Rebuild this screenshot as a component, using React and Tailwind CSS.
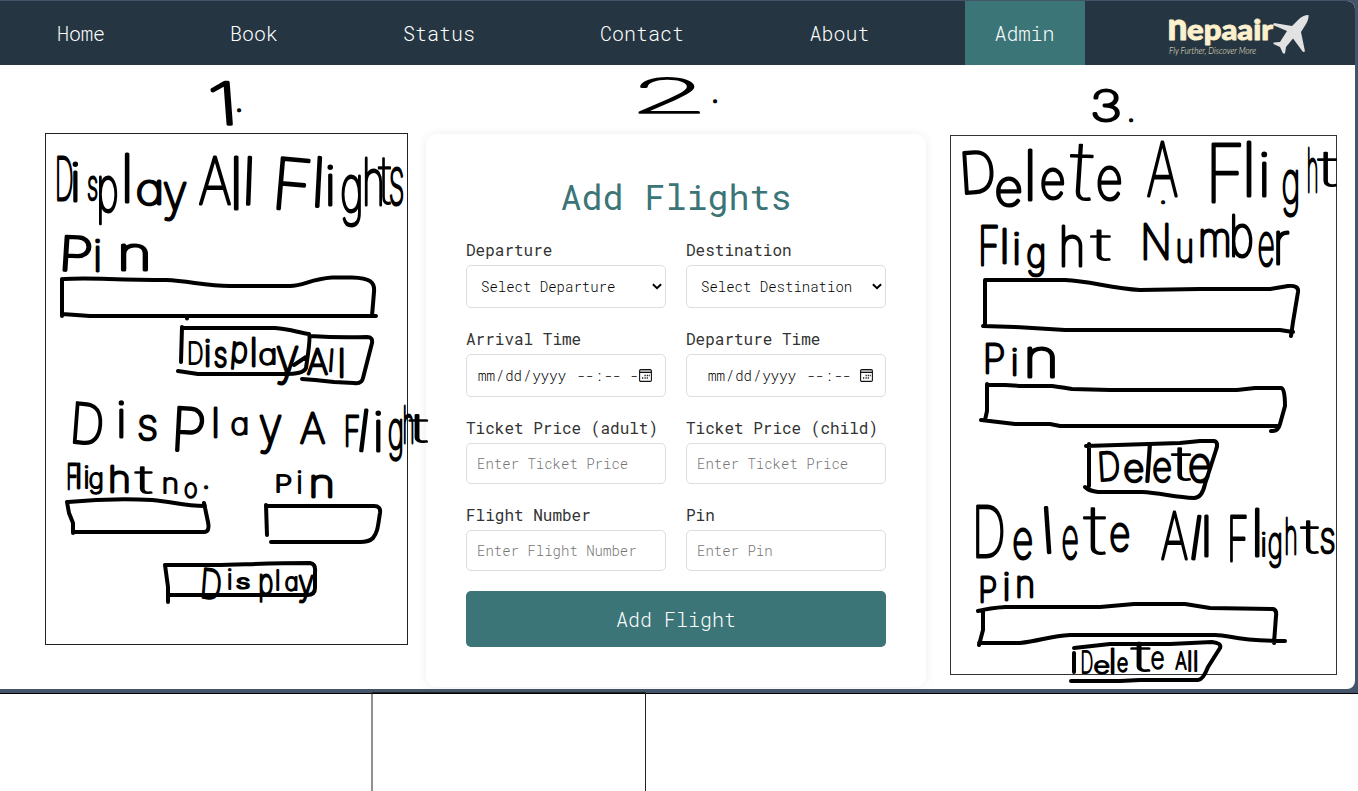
import React from "react";

/* Proportions of each letter: [advance, left bearing, ink width, ink top, ink bottom] in em. */
const M = {
  D: [0.72, 0.09, 0.57, 0.727, 0], A: [0.68, 0.03, 0.62, 0.727, 0], F: [0.6, 0.09, 0.46, 0.727, 0],
  P: [0.63, 0.09, 0.5, 0.727, 0], N: [0.75, 0.09, 0.57, 0.727, 0],
  a: [0.61, 0.05, 0.485, 0.55, 0], e: [0.59, 0.05, 0.48, 0.55, 0], o: [0.6, 0.05, 0.49, 0.55, 0],
  n: [0.59, 0.08, 0.445, 0.55, 0], u: [0.59, 0.08, 0.445, 0.55, 0], m: [0.88, 0.08, 0.73, 0.55, 0],
  s: [0.53, 0.05, 0.43, 0.55, 0], r: [0.38, 0.08, 0.29, 0.55, 0],
  h: [0.6, 0.08, 0.445, 0.727, 0], b: [0.61, 0.075, 0.49, 0.727, 0], t: [0.36, 0.02, 0.3, 0.69, 0],
  p: [0.61, 0.075, 0.49, 0.55, 0.2], g: [0.61, 0.05, 0.485, 0.55, 0.2], y: [0.56, 0.03, 0.5, 0.55, 0.2],
  i: [0.24, 0.09, 0, 0.727, 0], l: [0.24, 0.1, 0, 0.727, 0],
  1: [0.45, 0.05, 0.25, 0.727, 0], 2: [0.62, 0.06, 0.5, 0.727, 0], 3: [0.64, 0.06, 0.52, 0.727, 0],
};

/* Handwritten words; every letter is [char, left, right, top, bottom, tilt in degrees]. */
const WORDS = [
  [["1", 213, 230, 83, 125, -3], [".", 239, 110]],
  [["2", 635, 703, 78, 113], [".", 715, 101]],
  [["3", 1093, 1119, 90, 121], [".", 1131, 120]],
  [["D", 57, 72, 157, 200], ["i", 76, 76, 163, 201], ["s", 88, 97, 177, 199], ["p", 99, 117, 177, 223], ["l", 128, 128, 154, 202], ["a", 138, 161, 181, 204], ["y", 164, 186, 184, 220]],
  [["A", 200, 230, 157, 204], ["l", 237, 237, 157, 209], ["l", 249, 249, 157, 204, 2]],
  [["F", 276, 307, 157, 208, 5], ["l", 318, 318, 157, 206, 3], ["i", 331, 331, 166, 205], ["g", 342, 361, 176, 225], ["h", 365, 382, 158, 205], ["t", 379, 390, 157, 204], ["s", 390, 403, 168, 204]],
  [["P", 63, 90, 236, 270, 3], ["i", 98, 98, 240, 271], ["n", 122, 148, 245, 270]],
  [["D", 189, 202, 342, 364], ["i", 208, 208, 340, 366], ["s", 215, 226, 348, 366], ["p", 232, 246, 342, 368, 5], ["l", 254, 254, 338, 366], ["a", 260, 275, 349, 364], ["y", 277, 298, 348, 384]],
  [["A", 308, 327, 349, 374], ["l", 331, 331, 349, 371, 4], ["l", 342, 342, 349, 377]],
  [["D", 73, 100, 402, 442, 5], ["i", 122, 122, 401, 437], ["s", 139, 156, 416, 439], ["P", 175, 203, 407, 450, 3], ["l", 216, 216, 408, 437], ["a", 232, 247, 418, 434], ["y", 260, 281, 417, 453]],
  [["A", 301, 324, 413, 443]],
  [["F", 346, 359, 416, 446], ["l", 362, 362, 409, 450, 7], ["i", 379, 379, 412, 451], ["g", 389, 402, 420, 459], ["h", 404, 413, 406, 443], ["t", 410, 427, 414, 442]],
  [["F", 68, 77, 464, 489], ["l", 79, 79, 464, 488], ["i", 87, 87, 466, 488], ["g", 90, 102, 473, 493], ["h", 111, 128, 466, 492], ["t", 135, 152, 467, 493]],
  [["n", 164, 177, 478, 493], ["o", 185, 196, 483, 497], [".", 206, 487]],
  [["P", 277, 291, 475, 492], ["i", 300, 300, 471, 493], ["n", 312, 332, 476, 497]],
  [["D", 202, 219, 568, 597, 6], ["i", 230, 230, 569, 589], ["s", 236, 250, 578, 588], ["p", 260, 272, 575, 601], ["l", 278, 278, 570, 590], ["a", 286, 297, 577, 590], ["y", 299, 313, 576, 602]],
  [["D", 965, 994, 153, 194, -4], ["e", 997, 1020, 178, 205], ["l", 1031, 1031, 150, 200], ["e", 1042, 1063, 169, 198], ["t", 1069, 1089, 143, 199, 3], ["e", 1098, 1120, 167, 199]],
  [["A", 1148, 1177, 142, 196], [".", 1163, 202]],
  [["F", 1211, 1242, 144, 202], ["l", 1250, 1250, 142, 196], ["i", 1265, 1265, 152, 196], ["g", 1283, 1298, 171, 215], ["h", 1308, 1317, 148, 192], ["t", 1319, 1335, 152, 186]],
  [["F", 981, 998, 226, 265], ["l", 1005, 1005, 229, 263], ["i", 1017, 1017, 233, 264], ["g", 1028, 1044, 245, 275], ["h", 1062, 1082, 226, 266], ["t", 1086, 1115, 230, 260]],
  [["N", 1144, 1168, 224, 259], ["u", 1178, 1192, 240, 262], ["m", 1201, 1229, 230, 256], ["b", 1232, 1252, 215, 256], ["e", 1259, 1273, 233, 265], ["r", 1276, 1289, 232, 264]],
  [["P", 986, 1004, 344, 373], ["i", 1015, 1015, 349, 375], ["n", 1028, 1055, 348, 377]],
  [["D", 1101, 1119, 453, 481, -4], ["e", 1125, 1142, 461, 481], ["l", 1148, 1148, 445, 481, 4], ["e", 1154, 1170, 459, 481], ["t", 1173, 1189, 448, 480], ["e", 1190, 1209, 455, 481]],
  [["D", 976, 1003, 506, 557], ["e", 1014, 1031, 529, 558], ["l", 1050, 1050, 508, 553, -4], ["e", 1063, 1077, 527, 558], ["t", 1085, 1104, 507, 554], ["e", 1111, 1128, 524, 550]],
  [["A", 1162, 1187, 512, 559], ["l", 1194, 1194, 515, 558, 8], ["l", 1207, 1207, 516, 556]],
  [["F", 1230, 1247, 516, 561], ["l", 1258, 1258, 509, 556], ["i", 1264, 1264, 533, 556], ["g", 1269, 1281, 535, 567], ["h", 1286, 1296, 518, 554], ["t", 1302, 1317, 521, 553], ["s", 1321, 1334, 529, 552]],
  [["P", 981, 996, 577, 602], ["i", 1007, 1007, 573, 600], ["n", 1018, 1033, 577, 597]],
  [["D", 1082, 1092, 651, 673], ["e", 1095, 1108, 661, 673], ["l", 1113, 1113, 649, 673], ["e", 1118, 1127, 658, 671], ["t", 1131, 1150, 642, 671], ["e", 1152, 1163, 652, 668]],
  [["A", 1176, 1186, 652, 669], ["l", 1190, 1190, 651, 671], ["l", 1196, 1196, 651, 671]],
];

function glyph([ch, x0, x1, top, bottom]) {
  if (ch === ".") return { x: x0 - 4, y: x1 + 1.2, size: 30, pen: 2.6 };
  const [adv, lsb, ink, up, down] = M[ch];
  const size = (bottom - top) / (up + down);
  const y = bottom - down * size;
  const pen = size > 45 ? 3.1 : size > 32 ? 2.8 : 2.2;
  if (!ink) return { x: x0 - 0.12 * size, y, size, pen };
  /* Wide strokes thicken when a letter is stretched, so the stretch is limited. */
  const full = (x1 - x0) / (ink * size);
  const k = Math.min(full, ch === "t" ? 1.25 : ch === "2" ? 2.7 : 1.45);
  const mid = (x0 + x1) / 2;
  return {
    x: mid - (lsb + ink / 2) * size * k,
    y,
    size,
    length: adv * size * k,
    pen: ch === "t" || ch === "2" ? 1.7 : pen,
  };
}

function Word({ letters }) {
  return (
    <text>
      {letters.map((l, i) => {
        const g = glyph(l);
        return (
          <tspan key={i} x={g.x} y={g.y} fontSize={g.size} strokeWidth={g.pen} rotate={l[5]} textLength={g.length} lengthAdjust={g.length ? "spacingAndGlyphs" : undefined}>
            {l[0]}
          </tspan>
        );
      })}
    </text>
  );
}

/* Hand-drawn boxes. */
const BOXES = [
  "M62 279 V316 M64 279 C90 277 110 280 166 280 C190 281 205 286 230 286 H290 C304 286 310 279 332 277.500 H352 C370 278 375 282 374 292 L372 316 M62 314 L90 316 H376",
  "M182 327 L181 362 M182 328 H275 C290 329 300 333 309 334 C311 338 307 360 306 368 C304 373 296 374 285 374 H198 L178 371 M310 336 C325 337 340 338 367 337 Q373 337 372 343 L363 378 Q362 384 354 383 L334 382 L315 380 L302 379 M294 365 L306 357",
  "M67 502 L69 513 L73 523 V533 M68 502 C100 499 130 499 152 500 C175 502 182 506 205 506 M204 503 L208 522 Q210 532 204 532 H74",
  "M266 505 L267 535 M267 506 H374 Q381 506 380 513 C378 525 378 532 373 538 Q369 542 360 542 H271",
  "M165 565 L168 587 V602 M165 565 H215 C240 565 260 563 310 563 Q316 564 315 572 V588 Q315 595 307 595 H168",
  "M985 280 L985 326 M985 280 H1065 C1090 281 1110 288 1140 290 L1200 289 H1270 L1288 286 Q1299 285 1298 292 L1293 322 L1291 336 M983 326 L1015 327 L1065 330 H1280 L1293 332",
  "M987 384 V411 L985 420 M988 385 H1005 L1020 386 H1052 Q1067 388 1072 389 L1110 390 H1237 L1255 388 H1281 Q1285 388 1285 406 L1280 424 Q1278 432 1271 431 M981 420 L1015 424 H1050 L1060 426 H1279",
  "M1089 444 V486 M1086 446 L1180 443 L1200 441 H1214 Q1219 442 1216 450 L1205 484 Q1202 498 1194 498 C1175 497 1160 493 1142 492 H1098 Q1089 491 1085 487",
  "M978 611 Q990 608 1005 607 H1100 L1134 604 H1185 L1210 608 L1273 609 Q1277 610 1276 616 L1274 643 M983 611 V630 L979 645 M979 643 H1020 C1040 641 1050 636 1070 635 H1215 C1232 635 1232 641 1285 641",
  "M1074 653 V672 M1074 648 L1110 644 H1170 L1212 642 Q1222 643 1220 648 L1208 667 Q1203 680 1198 680 H1140 L1120 681 H1071",
];

const NAV = [
  ["Home", "w-[162px]"], ["Book", "w-[184px]"], ["Status", "w-[186px]"], ["Contact", "w-[220px]"],
  ["About", "w-[175px]"],
];

function Logo() {
  return (
    <svg width="148" height="64" viewBox="1165 1 148 64" className="ml-[80px]" role="img">
      <g fill="#fdf0cd" stroke="#fdf0cd" strokeWidth="0.900" strokeLinejoin="round" fontFamily="Lato, sans-serif" fontWeight="900">
        <text y="40" fontSize="28">
          <tspan x="1167.500" fontSize="38" textLength="20" lengthAdjust="spacingAndGlyphs">n</tspan>
          <tspan x="1187" textLength="86" lengthAdjust="spacingAndGlyphs">epaair</tspan>
        </text>
      </g>
      <text x="1169" y="53.500" fill="#fdf0cd" fontFamily="Lato, sans-serif" fontStyle="italic" fontSize="9.500" textLength="87" lengthAdjust="spacingAndGlyphs">
        Fly Further, Discover More
      </text>
      <path fill="#e2e2e2" d="M1308.5 15 Q1303 15 1298 20 L1292 26 L1274 23 L1273 25 L1287 31 L1280 42 L1273.500 42.500 L1273.500 44 L1280 47 L1283 53.500 L1285 53.500 L1286 47 L1293 38.500 L1303 52 L1305 51.500 L1301 32 L1306 24 Q1309 19 1308.500 15Z" />
    </svg>
  );
}

function CalendarIcon() {
  return (
    <svg width="13" height="13" viewBox="0 0 13 13" fill="none" stroke="#111" className="-mt-px shrink-0">
      <path d="M1 2.200H12" stroke="#aaa" strokeWidth="1.500" />
      <rect x="0.600" y="0.600" width="11.800" height="11.800" rx="1.200" strokeWidth="1.100" />
      <path d="M0.700 3.500H12.300" strokeWidth="1" />
      <path d="M5.500 6.500h1.200M7.700 6.500h1.200M9.700 6.500h1M3 9h1.200M5.500 9h1.200M7.700 9h1.200" strokeWidth="1.300" />
    </svg>
  );
}

const FIELD = "flex items-center rounded-[5px] border border-[#ddd] bg-white text-[14px] font-light overflow-hidden";

function Field({ label, children }) {
  return (
    <div className="flex flex-col">
      <div className="h-[24px] mb-[3px] text-[16px] leading-[24px] text-[#333] whitespace-nowrap">{label}</div>
      {children}
    </div>
  );
}

function Select({ text }) {
  return (
    <div className={FIELD + " h-[43px] pl-[14px] pr-[3px] justify-between text-black"}>
      <span>{text}</span>
      <svg width="10" height="7" viewBox="0 0 10 7" fill="none" stroke="#000" strokeWidth="2">
        <path d="M0.900 1.200 5 5.200 9.100 1.200" />
      </svg>
    </div>
  );
}

function DateField({ shifted }) {
  return (
    <div className={FIELD + " h-[43px] text-black whitespace-nowrap " + (shifted ? "pl-[21px]" : "pl-[11px]")}>
      <span className="w-[99px]"><span>mm</span><span className="px-[1px]">/</span><span>dd</span><span className="px-[1px]">/</span><span>yyyy</span></span>
      <span className="flex w-[53px]"><span>--</span><span className="px-[1px]">:</span><span>--</span></span>
      {!shifted && <span className="w-[9px] overflow-hidden">-</span>}
      <CalendarIcon />
    </div>
  );
}

function Input({ text }) {
  return <div className={FIELD + " h-[41px] pl-[10px] text-[#757575]"}>{text}</div>;
}

export default function App() {
  return (
    <div className="relative h-[791px] w-[1358px] overflow-hidden bg-white font-['Roboto_Mono','Liberation_Mono',monospace]">
      <div className="h-[694px] border-b border-black bg-[#445469] pr-[3px] pt-px">
        <div className="flex h-[688px] flex-col overflow-hidden rounded-r-[8px] bg-white">
          <nav className="flex h-[64px] shrink-0 items-stretch bg-[#253642] text-[20px] font-light text-white">
            <div className="flex w-[965px]">
              {NAV.map(([n, w]) => (
                <div key={n} className={"flex shrink-0 items-center justify-center " + w}>{n}</div>
              ))}
            </div>
            <div className="flex w-[120px] items-center justify-center bg-[#3b7577] pr-px">Admin</div>
            <div className="flex items-center"><Logo /></div>
          </nav>
          <main className="flex justify-center pr-[3px] pt-[69px]">
            <section className="flex h-[553px] w-[500px] flex-col rounded-[10px] bg-white px-[40px] pt-[38px] shadow-[0_0_10px_rgba(0,0,0,0.08)]">
              <h1 className="h-[48px] text-center text-[35px] leading-[48px] text-[#3b7577]">Add Flights</h1>
              <div className="mt-[18px] grid grid-cols-[200px_200px] gap-x-[20px]">
                <div className="h-[89px]"><Field label="Departure"><Select text="Select Departure" /></Field></div>
                <div className="h-[89px]"><Field label="Destination"><Select text="Select Destination" /></Field></div>
                <div className="h-[89px]"><Field label="Arrival Time"><DateField /></Field></div>
                <div className="h-[89px]"><Field label="Departure Time"><DateField shifted /></Field></div>
                <div className="h-[87px]"><Field label="Ticket Price (adult)"><Input text="Enter Ticket Price" /></Field></div>
                <div className="h-[87px]"><Field label="Ticket Price (child)"><Input text="Enter Ticket Price" /></Field></div>
                <div className="h-[88px]"><Field label="Flight Number"><Input text="Enter Flight Number" /></Field></div>
                <div className="h-[88px]"><Field label="Pin"><Input text="Enter Pin" /></Field></div>
              </div>
              <button className="h-[56px] shrink-0 rounded-[5px] bg-[#3b7577] text-[20px] font-light text-white">Add Flight</button>
            </section>
          </main>
        </div>
      </div>
      <svg width="1358" height="791" viewBox="0 0 1358 791" className="pointer-events-none absolute left-0 top-0 font-['Inter',sans-serif] [font-feature-settings:'cv11']">
        <g fill="none" stroke="#222" strokeWidth="1">
          <rect x="45.500" y="133.500" width="362" height="511" />
          <rect x="950.500" y="135.500" width="386" height="539" stroke="#333" />
          <path d="M372 800V692.500H645.500V800" stroke="#222" />
        </g>
        <g fill="none" stroke="#000" strokeWidth="4" strokeLinecap="round" strokeLinejoin="round">
          {BOXES.map((d) => <path key={d} d={d} />)}
          <circle cx="187" cy="318.500" r="2" fill="#000" stroke="none" />
        </g>
        <g fill="#000" stroke="#000" strokeLinejoin="round" fontWeight="100">
          {WORDS.map((w, i) => <Word key={i} letters={w} />)}
        </g>
      </svg>
    </div>
  );
}
